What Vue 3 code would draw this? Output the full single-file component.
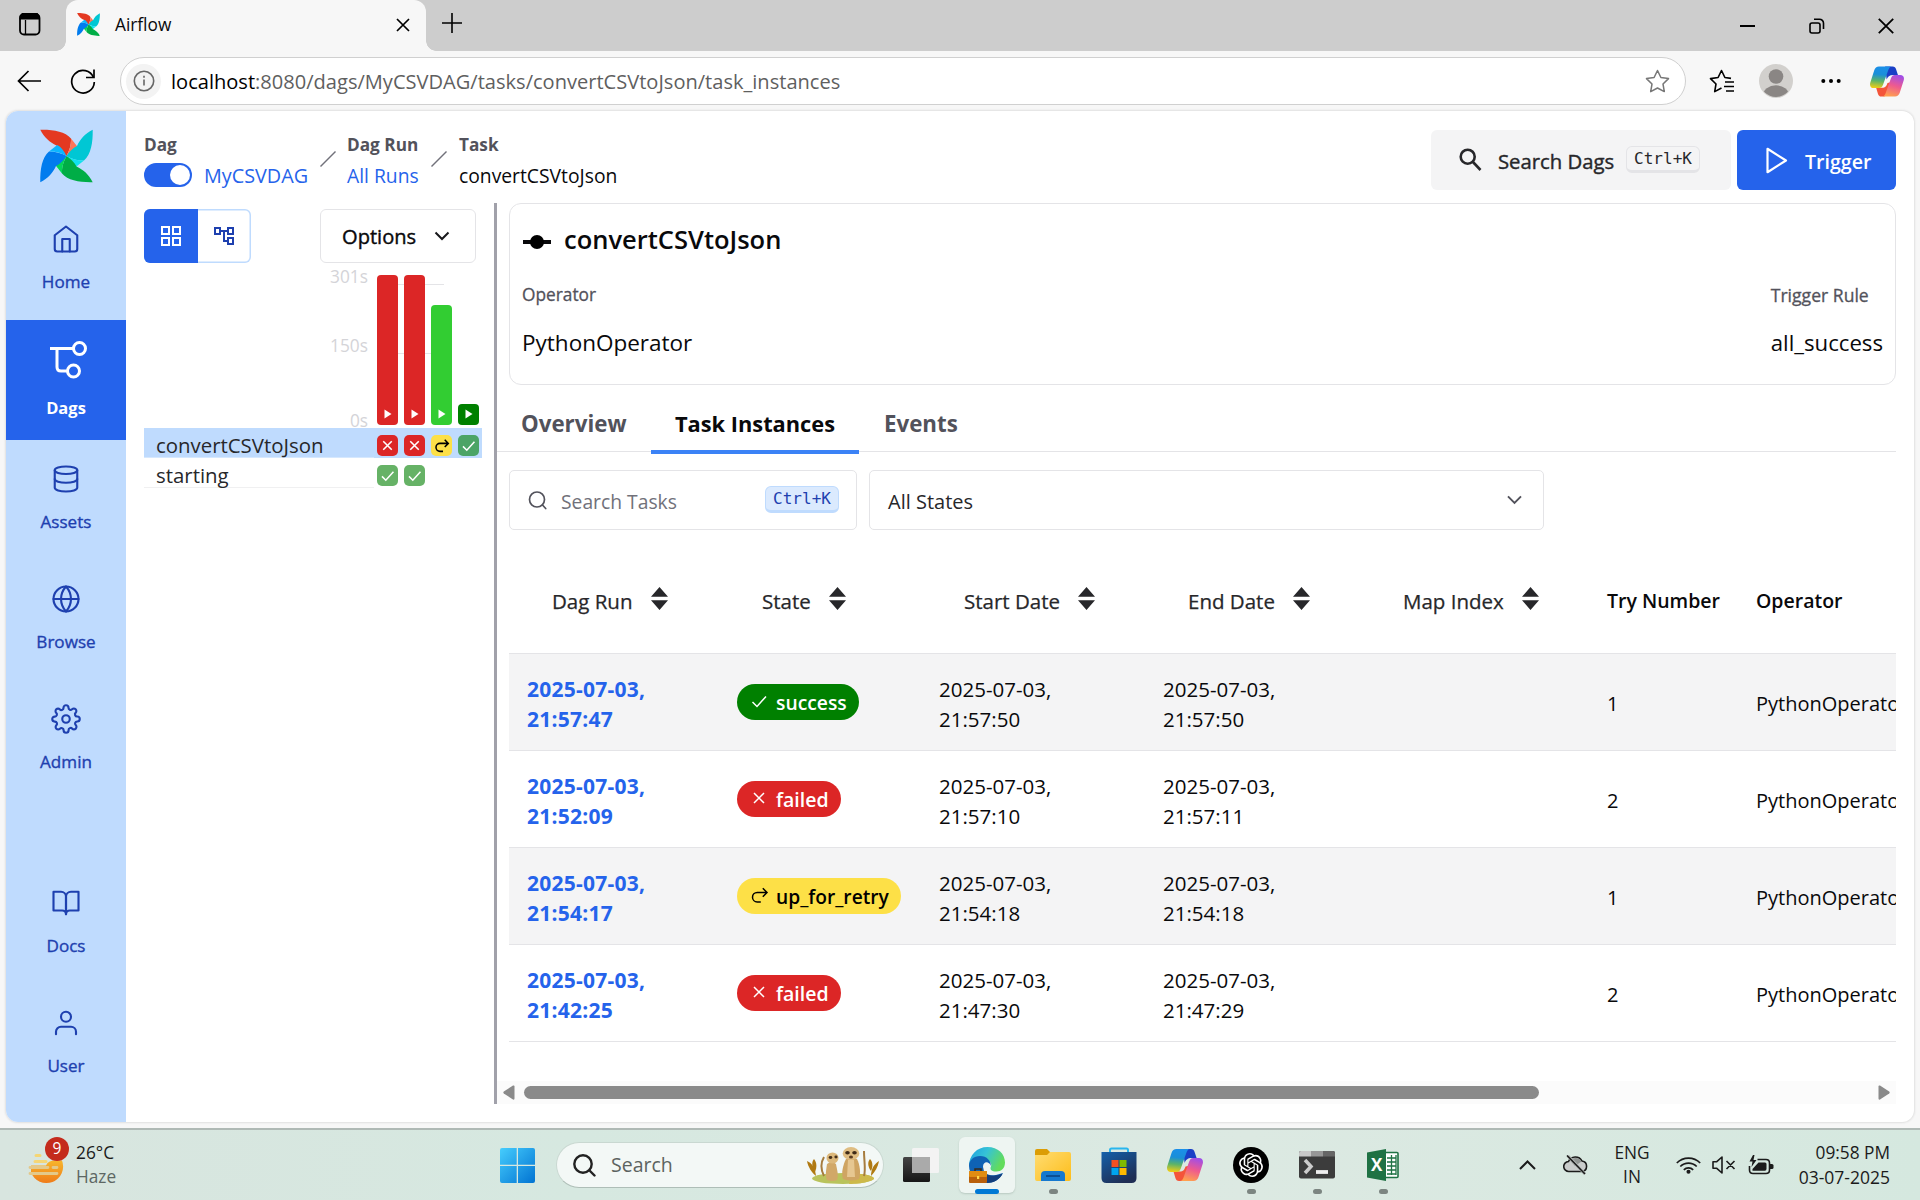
<script setup>
const navTop = [
  { label: 'Home', icon: 'home' },
  { label: 'Dags', icon: 'dags', active: true },
  { label: 'Assets', icon: 'db' },
  { label: 'Browse', icon: 'globe' },
  { label: 'Admin', icon: 'gear' },
]
const navBottom = [
  { label: 'Docs', icon: 'book' },
  { label: 'User', icon: 'user' },
]
const iconPaths = {
  home: ['M3 9l9-7 9 7v11a2 2 0 0 1-2 2H5a2 2 0 0 1-2-2z', 'M9 22V12h6v10'],
  db: ['M3 5a9 3 0 1 0 18 0a9 3 0 1 0-18 0', 'M21 12c0 1.66-4 3-9 3s-9-1.34-9-3', 'M3 5v14c0 1.66 4 3 9 3s9-1.34 9-3V5'],
  globe: ['M2 12a10 10 0 1 0 20 0a10 10 0 1 0-20 0', 'M2 12h20', 'M12 2a15.3 15.3 0 0 1 4 10 15.3 15.3 0 0 1-4 10 15.3 15.3 0 0 1-4-10 15.3 15.3 0 0 1 4-10z'],
  gear: ['M9 12a3 3 0 1 0 6 0a3 3 0 1 0-6 0', 'M19.4 15a1.65 1.65 0 0 0 .33 1.82l.06.06a2 2 0 0 1 0 2.83 2 2 0 0 1-2.83 0l-.06-.06a1.65 1.65 0 0 0-1.82-.33 1.65 1.65 0 0 0-1 1.51V21a2 2 0 0 1-2 2 2 2 0 0 1-2-2v-.09A1.65 1.65 0 0 0 9 19.4a1.65 1.65 0 0 0-1.82.33l-.06.06a2 2 0 0 1-2.83 0 2 2 0 0 1 0-2.83l.06-.06a1.65 1.65 0 0 0 .33-1.82 1.65 1.65 0 0 0-1.51-1H3a2 2 0 0 1-2-2 2 2 0 0 1 2-2h.09A1.65 1.65 0 0 0 4.6 9a1.65 1.65 0 0 0-.33-1.82l-.06-.06a2 2 0 0 1 0-2.83 2 2 0 0 1 2.83 0l.06.06a1.65 1.65 0 0 0 1.82.33H9a1.65 1.65 0 0 0 1-1.51V3a2 2 0 0 1 2-2 2 2 0 0 1 2 2v.09a1.65 1.65 0 0 0 1 1.51 1.65 1.65 0 0 0 1.82-.33l.06-.06a2 2 0 0 1 2.83 0 2 2 0 0 1 0 2.83l-.06.06a1.65 1.65 0 0 0-.33 1.82V9a1.65 1.65 0 0 0 1.51 1H21a2 2 0 0 1 2 2 2 2 0 0 1-2 2h-.09a1.65 1.65 0 0 0-1.51 1z'],
  book: ['M2 3h6a4 4 0 0 1 4 4v14a3 3 0 0 0-3-3H2z', 'M22 3h-6a4 4 0 0 0-4 4v14a3 3 0 0 1 3-3h7z'],
  user: ['M20 21v-2a4 4 0 0 0-4-4H8a4 4 0 0 0-4 4v2', 'M8 7a4 4 0 1 0 8 0a4 4 0 1 0-8 0'],
}
const runs = [
  { h: 150, color: '#dc2626' },
  { h: 150, color: '#dc2626' },
  { h: 120, color: '#32cd32' },
  { h: 21, color: '#008000' },
]
const statePaths = {
  success: 'M3.5 11 8 15.5 17 5.5',
  failed: 'M5 5l10 10M15 5 5 15',
  retry: 'M17.5 7.5H8.2a4.7 4.7 0 0 0 0 9.4h3.6M13.8 3.2l4.2 4.3-4.2 4.3',
}
const gridRows = [
  { name: 'convertCSVtoJson', selected: true, cells: ['failed', 'failed', 'retry', 'success'] },
  { name: 'starting', cells: ['success', 'success'] },
]
const sortable = ['Dag Run', 'State', 'Start Date', 'End Date', 'Map Index']
const rows = [
  { run: '21:57:47', state: 'success', label: 'success', start: '21:57:50', end: '21:57:50', tries: 1 },
  { run: '21:52:09', state: 'failed', label: 'failed', start: '21:57:10', end: '21:57:11', tries: 2 },
  { run: '21:54:17', state: 'retry', label: 'up_for_retry', start: '21:54:18', end: '21:54:18', tries: 1 },
  { run: '21:42:25', state: 'failed', label: 'failed', start: '21:47:30', end: '21:47:29', tries: 2 },
]
const blades = [
  { r: 0, a: '#e43921', b: '#ff7557' },
  { r: 90, a: '#00c7d4', b: '#11e1ee' },
  { r: 180, a: '#00ad46', b: '#04d659' },
  { r: 270, a: '#017cee', b: '#0cb6ff' },
]
const openai = 'M22.2819 9.8211a5.9847 5.9847 0 0 0-.5157-4.9108 6.0462 6.0462 0 0 0-6.5098-2.9A6.0651 6.0651 0 0 0 4.9807 4.1818a5.9847 5.9847 0 0 0-3.9977 2.9 6.0462 6.0462 0 0 0 .7427 7.0966 5.98 5.98 0 0 0 .511 4.9107 6.051 6.051 0 0 0 6.5146 2.9001A5.9847 5.9847 0 0 0 13.2599 24a6.0557 6.0557 0 0 0 5.7718-4.2058 5.9894 5.9894 0 0 0 3.9977-2.9001 6.0557 6.0557 0 0 0-.7475-7.0729zm-9.022 12.6081a4.4755 4.4755 0 0 1-2.8764-1.0408l.1419-.0804 4.7783-2.7582a.7948.7948 0 0 0 .3927-.6813v-6.7369l2.02 1.1686a.071.071 0 0 1 .038.052v5.5826a4.504 4.504 0 0 1-4.4945 4.4944zm-9.6607-4.1254a4.4708 4.4708 0 0 1-.5346-3.0137l.142.0852 4.783 2.7582a.7712.7712 0 0 0 .7806 0l5.8428-3.3685v2.3324a.0804.0804 0 0 1-.0332.0615L9.74 19.9502a4.4992 4.4992 0 0 1-6.1408-1.6464zM2.3408 7.8956a4.485 4.485 0 0 1 2.3655-1.9728V11.6a.7664.7664 0 0 0 .3879.6765l5.8144 3.3543-2.0201 1.1685a.0757.0757 0 0 1-.071 0l-4.8303-2.7865A4.504 4.504 0 0 1 2.3408 7.872zm16.5963 3.8558L13.1038 8.364 15.1192 7.2a.0757.0757 0 0 1 .071 0l4.8303 2.7913a4.4944 4.4944 0 0 1-.6765 8.1042v-5.6772a.79.79 0 0 0-.407-.667zm2.0107-3.0231l-.142-.0852-4.7735-2.7818a.7759.7759 0 0 0-.7854 0L9.409 9.2297V6.8974a.0662.0662 0 0 1 .0284-.0615l4.8303-2.7866a4.4992 4.4992 0 0 1 6.6802 4.66zM8.3065 12.863l-2.02-1.1638a.0804.0804 0 0 1-.038-.0567V6.0742a4.4992 4.4992 0 0 1 7.3757-3.4537l-.142.0805L8.704 5.459a.7948.7948 0 0 0-.3927.6813zm1.0976-2.3654l2.602-1.4998 2.6069 1.4998v2.9994l-2.5974 1.4997-2.6067-1.4997Z'
</script>

<template>
  <div class="screen">
    <!-- shared vector symbols -->
    <svg class="defs" width="0" height="0">
      <defs>
        <linearGradient id="cpA" x1="0.3" y1="0" x2="0.2" y2="1"><stop offset="0" stop-color="#1b8fe8" /><stop offset=".35" stop-color="#1a8fd8" /><stop offset=".65" stop-color="#5bb36a" /><stop offset="1" stop-color="#f8cf10" /></linearGradient>
        <linearGradient id="cpB" x1="0.7" y1="0" x2="0.4" y2="1"><stop offset="0" stop-color="#a04ee8" /><stop offset=".5" stop-color="#ee5a8f" /><stop offset="1" stop-color="#ffa04f" /></linearGradient>
        <linearGradient id="edA" x1="0" y1="0" x2="1" y2=".4"><stop offset="0" stop-color="#1b9de2" /><stop offset=".5" stop-color="#36c3d6" /><stop offset="1" stop-color="#62dc5c" /></linearGradient>
        <linearGradient id="foA" x1="0" y1="0" x2="1" y2="1"><stop offset="0" stop-color="#ffdc72" /><stop offset="1" stop-color="#fdbd1a" /></linearGradient>
        <linearGradient id="stA" x1="0" y1="0" x2=".6" y2="1"><stop offset="0" stop-color="#1360ab" /><stop offset="1" stop-color="#1f2e54" /></linearGradient>
        <linearGradient id="wiA" x1="0" y1="0" x2="1" y2="1"><stop offset="0" stop-color="#46cdfd" /><stop offset="1" stop-color="#0173d2" /></linearGradient>
        <linearGradient id="suA" x1="0" y1="0" x2="0" y2="1"><stop offset="0" stop-color="#f7b62c" /><stop offset="1" stop-color="#ef7c1a" /></linearGradient>
        <linearGradient id="teA" x1="0" y1="0" x2="0" y2="1"><stop offset="0" stop-color="#444" /><stop offset="1" stop-color="#161616" /></linearGradient>
      </defs>
      <symbol id="copilot" viewBox="0 0 36 32">
        <path d="M16 0h8c2 0 3 1 3.600 3l2 6h-5c-4 0-6 2-7 5z" fill="#1a3fc6" />
        <path d="M12 32c-2 0-3-1-3.600-3L6.500 22.500h6c4 0 5-2 6-5l5-1-5 12c-1 2-2 3.500-4 3.500z" fill="#f4553a" />
        <path d="M9.500 0H23c-2 0-3 2-3.700 4l-5.500 15.500c-1 2.500-2 3.500-4 3.500H4c-3 0-4.500-2-3.800-5.500L4.500 4C5.300 1.500 7 0 9.500 0z" fill="url(#cpA)" />
        <path d="M26.500 32H13c2 0 3-2 3.700-4l5.500-15.500c1-2.500 2-3.500 4-3.500H32c3 0 4.500 2 3.800 5.500L31.500 28c-.8 2.500-2.500 4-5 4z" fill="url(#cpB)" />
      </symbol>
      <symbol id="pinwheel" viewBox="0 0 53 53">
        <g v-for="b in blades" :key="b.r" :transform="`rotate(${b.r} 26.5 26.500)`">
          <path d="M.3.300C13 0 25 2 31 9c.3 7-2 13-4.500 17.500C22.500 24 18.500 20 16.500 16 10 13 4 8 .3.300z" :fill="b.a" />
          <path d="M31 9l6.500 8.200c-2 4-6 7-11 9.300C29 22 31.200 16 31 9z" :fill="b.b" />
        </g>
      </symbol>
    </svg>

    <header class="tabbar">
      <svg class="ws" width="22" height="23" viewBox="0 0 22 23" fill="none" stroke="#000" stroke-width="1.800"><rect x="1" y="1" width="19.500" height="20.500" rx="4" /><path d="M1.500 5.500h18.500V3.500L18 1H3.500L1.500 3z" fill="#000" /><path d="M6.500 7v14" stroke-width="1.300" /></svg>
      <div class="tab">
        <svg width="23" height="23"><use href="#pinwheel" /></svg>
        <span>Airflow</span>
        <svg class="tabx" width="14" height="14" viewBox="0 0 14 14" stroke="#000" stroke-width="1.700"><path d="M1 1l12 12M13 1 1 13" /></svg>
      </div>
      <svg class="plus" width="22" height="22" viewBox="0 0 22 22" stroke="#000" stroke-width="1.600"><path d="M11 1v20M1 11h20" /></svg>
      <div class="winctl">
        <svg width="16" height="16" viewBox="0 0 16 16" stroke="#000" stroke-width="2"><path d="M0 8h15" /></svg>
        <svg width="16" height="16" viewBox="0 0 16 16" fill="none" stroke="#000" stroke-width="1.600"><rect x="1" y="5" width="10" height="10" rx="2" /><path d="M5 1.200h5.500a4 4 0 0 1 4 4V11" /></svg>
        <svg width="16" height="16" viewBox="0 0 16 16" stroke="#000" stroke-width="1.800"><path d="M.8.800l14.400 14.400M15.200.8.800 15.200" /></svg>
      </div>
    </header>

    <div class="toolbar">
      <svg class="back" width="24" height="22" viewBox="0 0 24 22" fill="none" stroke="#000" stroke-width="1.700"><path d="M11.500 1 1.500 11l10 10M1.500 11H24" /></svg>
      <svg class="reload" width="26" height="26" viewBox="0 0 26 26" fill="none" stroke="#000" stroke-width="1.700"><path d="M23.500 9.500A11.300 11.300 0 1 0 24.300 14" /><path d="M24 1.500v8h-8" /></svg>
      <div class="address">
        <span class="info"><svg width="22" height="22" viewBox="0 0 22 22" fill="none" stroke="#666" stroke-width="1.600"><circle cx="11" cy="11" r="9.700" /><path d="M11 9.500v6M11 5.700v2" /></svg></span>
        <span class="url"><b>localhost</b>:8080/dags/MyCSVDAG/tasks/convertCSVtoJson/task_instances</span>
        <svg class="star" width="25" height="25" viewBox="0 0 25 25" fill="none" stroke="#777" stroke-width="1.500" stroke-linejoin="round"><path d="M12.500 1.500l3.400 7 7.600 1.100-5.500 5.400 1.300 7.600-6.800-3.600-6.800 3.600L7 15 1.500 9.600l7.600-1.100z" /></svg>
      </div>
      <svg class="favs" width="26" height="25" viewBox="0 0 26 25" fill="none" stroke="#000" stroke-width="1.600" stroke-linejoin="round"><path d="M22 9.400l-6.100-.9-3.400-7-3.400 7-7.600 1.100L7 15l-1.300 7.600L12.500 19M16 13h9M15 17.500h10M17 22h8" /></svg>
      <svg class="avatar" width="34" height="34" viewBox="0 0 34 34"><defs><clipPath id="av"><circle cx="17" cy="17" r="16" /></clipPath></defs><circle cx="17" cy="17" r="17" fill="#d2d0cd" /><g clip-path="url(#av)" fill="#8a8684"><circle cx="17" cy="12.500" r="7.300" /><ellipse cx="17" cy="31" rx="13" ry="9.700" /></g></svg>
      <svg class="dots" width="20" height="6" viewBox="0 0 20 6"><circle cx="2.300" cy="3" r="2" /><circle cx="10" cy="3" r="2" /><circle cx="17.700" cy="3" r="2" /></svg>
      <svg width="34" height="31"><use href="#copilot" /></svg>
    </div>

    <div class="pagewrap">
      <div class="page">
        <nav class="side">
          <svg class="logo" width="53" height="54"><use href="#pinwheel" /></svg>
          <div v-for="n in navTop" :key="n.label" class="nav" :class="{ active: n.active }">
            <svg v-if="n.icon === 'dags'" width="38" height="38" viewBox="0 0 38 38" fill="none" stroke="#fff" stroke-width="3"><circle cx="30.500" cy="7.500" r="6" /><circle cx="24.500" cy="30" r="6" /><path d="M1 7.500h23M8 7.500V26q0 4 4 4h6.500" /></svg>
            <svg v-else width="30" height="30" viewBox="0 0 24 24" fill="none" stroke="currentColor" stroke-width="1.700" stroke-linecap="round" stroke-linejoin="round"><path v-for="p in iconPaths[n.icon]" :key="p" :d="p" /></svg>
            <span>{{ n.label }}</span>
          </div>
          <div class="grow"></div>
          <div v-for="n in navBottom" :key="n.label" class="nav">
            <svg width="30" height="30" viewBox="0 0 24 24" fill="none" stroke="currentColor" stroke-width="1.700" stroke-linecap="round" stroke-linejoin="round"><path v-for="p in iconPaths[n.icon]" :key="p" :d="p" /></svg>
            <span>{{ n.label }}</span>
          </div>
        </nav>

        <main class="main">
          <div class="top">
            <div class="crumbs">
              <div class="crumb c1"><b>Dag</b><span class="dagline"><i class="toggle"></i><a>MyCSVDAG</a></span></div>
              <svg class="slash" width="16" height="16" viewBox="0 0 16 16" stroke="#71717a" stroke-width="1.400"><path d="M.5 15.500 15.500.500" /></svg>
              <div class="crumb c2"><b>Dag Run</b><a>All Runs</a></div>
              <svg class="slash" width="16" height="16" viewBox="0 0 16 16" stroke="#71717a" stroke-width="1.400"><path d="M.5 15.500 15.500.500" /></svg>
              <div class="crumb c3"><b>Task</b><span class="cur">convertCSVtoJson</span></div>
            </div>
            <div class="searchdags">
              <svg width="23" height="24" viewBox="0 0 23 24" fill="none" stroke="#27272a" stroke-width="2.600"><circle cx="8.700" cy="8.700" r="7" /><path d="M13.500 13.500l8 8.500" /></svg>
              <span class="medium">Search Dags</span><kbd>Ctrl+K</kbd>
            </div>
            <div class="trigger">
              <svg width="22" height="27" viewBox="0 0 22 27" fill="none" stroke="#fff" stroke-width="2.200" stroke-linejoin="round"><path d="M1.500 1.800v23.400L20 13.500z" /></svg>
              <span>Trigger</span>
            </div>
          </div>

          <div class="body">
            <section class="left">
              <div class="controls">
                <div class="views">
                  <span class="on"><svg width="20" height="20" viewBox="0 0 20 20" fill="none" stroke="#fff" stroke-width="2"><path d="M1 1h7v7H1zM12 1h7v7h-7zM1 12h7v7H1zM12 12h7v7h-7z" /></svg></span>
                  <span><svg width="24" height="24" viewBox="0 0 24 24" fill="#1e40af"><path d="M22 11V3h-7v3H9V3H2v8h7V8h2v10h4v3h7v-8h-7v3h-2V8h2v3h7zM7 9H4V5h3v4zm10 6h3v4h-3v-4zm0-10h3v4h-3V5z" /></svg></span>
                </div>
                <div class="options"><span class="medium">Options</span><svg width="16" height="10" viewBox="0 0 16 10" fill="none" stroke="#18181b" stroke-width="2"><path d="M1.500 1.500 8 8l6.500-6.500" /></svg></div>
              </div>
              <div class="chart">
                <div class="axis"><span>301s</span><span>150s</span><span>0s</span></div>
                <div class="bars">
                  <i class="gl g1"></i><i class="gl g2"></i>
                  <div v-for="(r, i) in runs" :key="i" class="bar" :style="{ height: r.h + 'px', background: r.color }">
                    <svg width="8" height="10" viewBox="0 0 8 10" fill="#fff"><path d="M.5.500v9L7.500 5z" /></svg>
                  </div>
                </div>
              </div>
              <div v-for="g in gridRows" :key="g.name" class="grow-row" :class="{ sel: g.selected }">
                <span class="gname">{{ g.name }}</span>
                <span class="cells">
                  <i v-for="(c, i) in g.cells" :key="i" :class="['cell', c]"><svg width="17" height="17" viewBox="0 0 20 20" fill="none" stroke="currentColor" stroke-width="1.800"><path :d="statePaths[c]" /></svg></i>
                </span>
              </div>
            </section>
            <div class="splitter"></div>

            <section class="right">
              <div class="card">
                <div class="title">
                  <svg width="30" height="16" viewBox="0 0 30 16"><path d="M1 8h28" stroke="#09090b" stroke-width="3.800" /><circle cx="15" cy="8" r="7" fill="#000" /></svg>
                  <span>convertCSVtoJson</span>
                </div>
                <div class="facts">
                  <div><small>Operator</small><p>PythonOperator</p></div>
                  <div class="f2"><small>Trigger Rule</small><p>all_success</p></div>
                </div>
              </div>
              <div class="tabs"><span class="t1">Overview</span><span class="t2">Task Instances</span><span class="t3">Events</span></div>
              <div class="filters">
                <div class="stask">
                  <svg width="19" height="19" viewBox="0 0 19 19" fill="none" stroke="#52525b" stroke-width="1.700" stroke-linecap="round"><circle cx="9" cy="8.500" r="7.500" /><path d="M14.500 14l3.200 3.500" /></svg>
                  <span>Search Tasks</span><kbd>Ctrl+K</kbd>
                </div>
                <div class="states"><span>All States</span><svg width="15" height="10" viewBox="0 0 15 10" fill="none" stroke="#52525b" stroke-width="1.900"><path d="M1 1.300 7.500 8 14 1.300" /></svg></div>
              </div>
              <div class="table">
                <div class="tr th">
                  <div v-for="s in sortable" :key="s" class="hs"><span>{{ s }}</span><svg width="17" height="23" viewBox="0 0 17 23" fill="#27272a"><path d="M8.500 0 17 9.800H0zM8.500 23 17 13.200H0z" /></svg></div>
                  <div class="hb">Try Number</div><div class="hb">Operator</div>
                </div>
                <div v-for="(r, i) in rows" :key="i" class="tr td">
                  <div class="date link">2025-07-03,<br>{{ r.run }}</div>
                  <div><span :class="['badge', r.state]"><svg width="20" height="20" viewBox="0 0 20 20" fill="none" stroke="currentColor" stroke-width="1.500"><path :d="statePaths[r.state]" /></svg><b>{{ r.label }}</b></span></div>
                  <div class="date">2025-07-03,<br>{{ r.start }}</div>
                  <div class="date">2025-07-03,<br>{{ r.end }}</div>
                  <div></div>
                  <div class="op">{{ r.tries }}</div>
                  <div class="op">PythonOperator</div>
                </div>
              </div>
              <div class="hscroll">
                <svg width="12" height="15" viewBox="0 0 12 15" fill="#8a8a8a"><path d="M11.500 1.500v12q0 1.500-1.500 1L.8 8.500q-1-1 0-2L10 .5q1.500-.5 1.500 1z" /></svg>
                <i class="thumb"></i>
                <svg class="rt" width="12" height="15" viewBox="0 0 12 15" fill="#8a8a8a"><path d="M.5 1.500v12q0 1.500 1.500 1l9.200-6q1-1 0-2L2 .5Q.5 0 .5 1.500z" /></svg>
              </div>
            </section>
          </div>
        </main>
      </div>
    </div>

    <footer class="taskbar">
      <div class="weather">
        <div class="wicon">
          <svg width="36" height="32" viewBox="0 0 36 32"><path d="M3 13.500h15q2-5 9-5l7 0a16.500 16.500 0 0 1-31 12z" fill="url(#suA)" /><path d="M8 3.500h4M7 9.500h11" stroke="#f5d675" stroke-width="3" stroke-linecap="round" /><path d="M2 15.500h18M25 15.500h4M2 21.500h27" stroke="#e3c98b" stroke-width="2.800" stroke-linecap="round" /></svg>
          <span class="nine">9</span>
        </div>
        <div class="wt"><span>26°C</span><span class="dim">Haze</span></div>
      </div>
      <svg class="win" width="35" height="35" viewBox="0 0 35 35" fill="url(#wiA)"><path d="M2 0h14.700v16.700H0V2q0-2 2-2zM18 0h15q2 0 2 2v14.700H18zM0 18h16.700v17H2q-2 0-2-2zM18 18h17v15q0 2-2 2H18z" /></svg>
      <div class="tsearch">
        <svg width="23" height="23" viewBox="0 0 23 23" fill="none" stroke="#222" stroke-width="2.400" stroke-linecap="round"><circle cx="10" cy="10" r="8.700" /><path d="M16.500 16.500l5 5" /></svg>
        <span>Search</span>
        <svg class="meer" width="72" height="38" viewBox="0 0 72 38">
          <ellipse cx="36" cy="32.500" rx="31" ry="5.500" fill="#b9c35c" /><path d="M45 27.500c14 0 22 3 22 5s-12 5.500-25 5.500z" fill="#cdb94a" />
          <g fill="#b07a12"><path d="M9 30C5 27 1 21 0 15c5 2 8 7 9 15z" /><path d="M8 26C4 20 5 15 7 13c3 4 3 8 1 13z" /><path d="M64 30c4-4 7-9 8-15-5 3-8 8-8 15z" /><path d="M64 25c-4-5-3-10-1-12 3 3 3 8 1 12z" /></g>
          <path d="M17 30c-4-8-3-14 0-19M57 30c2-6 0-15 0-25" stroke="#a67c3e" stroke-width="2" fill="none" />
          <path d="M20 34c-2-4-1-9 0-16q5-4 9 0c1 6 3 11 1 16q-5 2-10 0z" fill="#d1a868" /><ellipse cx="25.500" cy="12" rx="6" ry="5.500" fill="#dcb87b" /><ellipse cx="23.500" cy="11.500" rx="1.800" ry="1.400" fill="#463019" /><ellipse cx="29" cy="11" rx="1.600" ry="1.400" fill="#463019" />
          <path d="M36 33c-2-6 0-14 3-20q6-3 11 0c3 6 4 14 2 20q-8 3-16 0z" fill="#cfa563" /><path d="M41 14h6l1 17h-8z" fill="#e6c791" /><ellipse cx="44" cy="7.500" rx="8.300" ry="6.500" fill="#dfbd82" /><ellipse cx="40.500" cy="6.800" rx="2.300" ry="1.800" fill="#3e2a17" /><ellipse cx="47.500" cy="6.800" rx="2.300" ry="1.800" fill="#3e2a17" /><ellipse cx="44" cy="11" rx="2" ry="1.500" fill="#5a3c20" />
        </svg>
      </div>
      <svg class="tview" width="36" height="34" viewBox="0 0 36 34"><rect x="0" y="9" width="27" height="25" rx="1.500" fill="url(#teA)" /><rect x="9" y="0" width="27" height="25" rx="1.500" fill="#f3f3f3" /><rect x="9" y="9" width="18" height="16" fill="#aaa" /></svg>
      <div class="app active">
        <svg width="36" height="36" viewBox="0 0 36 36"><path d="M0 19C0 8 8 0 18.500 0 29 0 36 7 36 15.500c0 6-4 9-8.500 9-5 0-7-2-5.500-5 1-3-1-6-5-6z" fill="url(#edA)" /><path d="M0 19c0-6 5-10 11-10 7 0 11 5 11 10-2-5-8-5-8 1 0 7 6 9 13 8l7-2c-3 6-9 10-16 10C8 36 0 28 0 19z" fill="#0f62b4" /><path d="M14 20c0 7 6 9.500 12 8.500 3 0 5-1 7.500-2C31 33 24 36 18 36z" fill="#123e7c" /><rect x="0" y="24" width="18" height="12" rx="1" fill="#b85f0b" /><rect x="0" y="24" width="18" height="6" rx="1" fill="#e08c12" /><path d="M6 24v-2h6v2" stroke="#3a2a18" stroke-width="1.500" fill="none" /><rect x="8" y="29" width="2.200" height="3" fill="#ffd84a" /></svg>
        <i class="ind big"></i>
      </div>
      <div class="app">
        <svg width="36" height="36" viewBox="0 0 36 36"><path d="M0 4q0-2 2-2h10l3 3v5H0z" fill="#dc9d05" /><path d="M0 8h12l3-3h19q2 0 2 2v25q0 2-2 2H2q-2 0-2-2z" fill="url(#foA)" /><path d="M6 34v-6q0-4 4-4h16q4 0 4 4v6z" fill="#1579cf" /><path d="M11 29h14" stroke="#0c4f93" stroke-width="2" /></svg>
        <i class="ind"></i>
      </div>
      <div class="app">
        <svg width="36" height="36" viewBox="0 0 36 36"><path d="M9 6V3q0-1.500 1.500-1.500h15Q27 1.500 27 3v3" stroke="#29b6ee" stroke-width="2" fill="none" /><path d="M.5 5h35v26q0 5-5 5h-25q-5 0-5-5z" fill="url(#stA)" /><path d="M10.500 13h7v7h-7z" fill="#f25022" /><path d="M18.500 13h7v7h-7z" fill="#7fba00" /><path d="M10.500 21h7v7h-7z" fill="#00a4ef" /><path d="M18.500 21h7v7h-7z" fill="#ffb900" /></svg>
      </div>
      <div class="app"><svg width="36" height="32"><use href="#copilot" /></svg></div>
      <div class="app">
        <svg width="36" height="36" viewBox="0 0 36 36"><circle cx="18" cy="18" r="18" fill="#000" /><g transform="translate(6 6)"><path :d="openai" fill="#fff" /></g></svg>
        <i class="ind"></i>
      </div>
      <div class="app">
        <svg width="36" height="28" viewBox="0 0 36 28"><rect width="36" height="27.500" rx="2" fill="#3c3c3c" /><path d="M2 0h10v5.500H0V2q0-2 2-2z" fill="#c8c8c8" /><path d="M12 0h12v5.500H12z" fill="#979797" /><path d="M24 0h10q2 0 2 2v3.500H24z" fill="#666" /><path d="M6 9l6 6.500-6 6.500" stroke="#ccc" stroke-width="3.500" fill="none" /><path d="M17 21h12" stroke="#eee" stroke-width="3.800" /></svg>
        <i class="ind"></i>
      </div>
      <div class="app">
        <div class="excel">
          <svg width="32" height="32" viewBox="0 0 32 32"><rect x="14" y="3.500" width="17" height="25" rx="1" fill="#fff" stroke="#1f7244" stroke-width="1.600" /><path d="M20 9h9M20 13h9M20 17h9M20 21h9M20 25h9" stroke="#1f7244" stroke-width="1.300" /><path d="M24.500 6v20M29 6v20" stroke="#1f7244" stroke-width="1.300" /><path d="M0 3.500 19 0v32L0 28.500z" fill="#1f7244" /></svg>
          <span>X</span>
        </div>
        <i class="ind"></i>
      </div>
      <div class="tray">
        <svg class="caret" width="17" height="10" viewBox="0 0 17 10" fill="none" stroke="#1b1b1b" stroke-width="2"><path d="M1 9l7.500-7.500L16 9" /></svg>
        <svg class="cloud" width="25" height="20" viewBox="0 0 25 20"><path d="M6 16.500a5 5 0 0 1-.5-10 7.500 7.500 0 0 1 13.500-.5 5.300 5.300 0 0 1 0 10.500z" fill="#c9cccb" stroke="#1b1b1b" stroke-width="1.600" /><path d="M7 5.500a7 7 0 0 1 11.500 1L12 11z" fill="#909492" /><path d="M5 1l17 18" stroke="#b5bab8" stroke-width="3" /><path d="M4 .5 22 19" stroke="#1b1b1b" stroke-width="1.600" /></svg>
        <div class="lang"><span>ENG</span><span>IN</span></div>
        <svg class="wifi" width="25" height="18" viewBox="0 0 25 18" fill="none" stroke="#1b1b1b" stroke-width="1.700"><path d="M.8 7a16.500 16.500 0 0 1 23.400 0M4.300 10.500a11.600 11.600 0 0 1 16.400 0M7.800 13.800a6.700 6.700 0 0 1 9.400 0" /><circle cx="12.500" cy="15.800" r="1.200" fill="#1b1b1b" /></svg>
        <svg class="spk" width="24" height="18" viewBox="0 0 24 18" fill="none" stroke="#1b1b1b" stroke-width="1.600" stroke-linejoin="round"><path d="M1 5.800h3.500L10 1v16l-5.500-4.800H1zM14.500 5l8 8M22.500 5l-8 8" /></svg>
        <svg class="bat" width="26" height="20" viewBox="0 0 26 20"><path d="M9.500 4.500H18q3.500 0 3.500 3.500v7q0 3.500-3.500 3.500H5Q1.500 18.500 1.500 15v-4" fill="none" stroke="#1b1b1b" stroke-width="1.600" /><path d="M22 9h2q1.500 0 1.500 1.500v2q0 1.500-1.500 1.500h-2z" fill="#1b1b1b" /><path d="M10.500 7.500h6.500q1.500 0 1.500 1.500v5q0 1.700-1.700 1.700H4.500V14z" fill="#1b1b1b" /><path d="M5 0 1.500 6.500h3L3.500 12 8.500 5H5.500L6.500 0z" fill="#1b1b1b" /></svg>
        <div class="clock"><span>09:58 PM</span><span>03-07-2025</span></div>
      </div>
    </footer>
  </div>
</template>

<style>
html, body { margin: 0; background: #f7f7f7; }
</style>

<style scoped>
* { box-sizing: border-box; }
.screen { width: 1920px; height: 1200px; overflow: hidden; display: flex; flex-direction: column; background: #f7f7f7; font-family: "Open Sans", "Noto Sans", sans-serif; font-size: 20px; color: #09090b; line-height: 1; }
.defs { position: absolute; }
svg { flex: none; display: block; }
span, b, a { white-space: nowrap; }
.medium { -webkit-text-stroke: .4px currentColor; }

.tabbar { height: 51px; background: #cdcdcd; display: flex; align-items: center; flex: none; }
.ws { margin-left: 19px; margin-top: -3px; }
.tab { margin-left: 25px; width: 360px; height: 51px; background: #f7f7f7; border-radius: 12px 12px 0 0; display: flex; align-items: center; padding: 0 16px 3px 11px; position: relative; }
.tab::before, .tab::after { content: ""; position: absolute; bottom: 0; width: 10px; height: 10px; }
.tab::before { left: -10px; background: radial-gradient(circle at 0 0, #cdcdcd 9.5px, #f7f7f7 10px); }
.tab::after { right: -10px; background: radial-gradient(circle at 100% 0, #cdcdcd 9.5px, #f7f7f7 10px); }
.tab span { margin: 1px 0 0 15px; font-size: 17.3px; }
.tabx { margin-left: auto; margin-top: 1px; }
.plus { margin-left: 15px; margin-top: -5px; }
.winctl { margin-left: auto; margin-right: 26px; display: flex; gap: 53px; }

.toolbar { height: 60px; display: flex; align-items: center; flex: none; }
.back { margin-left: 17px; }
.reload { margin-left: 29px; }
.address { margin-left: 24px; width: 1566px; height: 48px; border: 1.5px solid #d0d0d0; border-radius: 24px; background: #fff; display: flex; align-items: center; padding: 0 15px 0 5px; }
.info { width: 35px; height: 35px; border-radius: 50%; background: #f3f3f3; display: flex; align-items: center; justify-content: center; }
.url { margin: 2px 0 0 10px; font-size: 20.070px; color: #5f5f5f; }
.url b { font-weight: 400; color: #000; }
.star { margin-left: auto; }
.favs { margin-left: 23px; }
.avatar { margin-left: 24px; }
.dots { margin: 0 29px 0 28px; }

.pagewrap { height: 1017px; padding: 0 6px 6px; flex: none; }
.page { height: 1011px; background: #fff; border-radius: 12px; box-shadow: 0 0 2px 1px #e0e0e0; display: flex; overflow: hidden; }
.side { width: 120px; background: #bfdbfe; display: flex; flex-direction: column; padding-bottom: 18px; color: #1e40af; }
.logo { margin: 18px 0 17px 34px; }
.nav { height: 120px; display: flex; flex-direction: column; align-items: center; padding-top: 24px; }
.nav span { font-size: 17.100px; margin-top: 19px; -webkit-text-stroke: .35px currentColor; }
.nav.active { background: #2563eb; color: #fff; padding-top: 21px; }
.nav.active span { font-weight: 700; margin-top: 21px; font-size: 16.500px; -webkit-text-stroke: 0; }
.nav.active svg { margin-left: 3px; }
.grow { flex: 1; }

.main { flex: 1; display: flex; flex-direction: column; min-width: 0; }
.top { height: 92px; display: flex; align-items: flex-start; padding: 19px 18px 0; }
.crumbs { display: flex; align-items: center; flex: 1; margin-top: 3px; height: 54px; }
.crumb { display: flex; flex-direction: column; }
.crumb b { font-size: 17.200px; color: #52525b; font-weight: 700; line-height: 24px; }
.crumb a, .crumb .cur { font-size: 19.300px; line-height: 24px; margin-top: 7px; }
.crumb a { color: #2563eb; }
.c1 { width: 176px; }
.c2 { width: 84px; }
.c3 { margin-left: 1px; }
.dagline { display: flex; align-items: center; margin-top: 6px; }
.crumb .dagline a { margin: 1px 0 0 12px; font-size: 19.800px; }
.toggle { width: 48px; height: 24px; border-radius: 12px; background: #2563eb; display: flex; justify-content: flex-end; align-items: center; padding-right: 2px; }
.toggle::after { content: ""; width: 20px; height: 20px; border-radius: 50%; background: #fff; }
.slash { margin-right: 11px; margin-top: -2px; }
.searchdags { width: 300px; height: 60px; border-radius: 6px; background: #f4f4f5; display: flex; align-items: center; padding-left: 28px; color: #27272a; }
.searchdags span { margin: 3px 0 0 16px; width: 128px; font-size: 20.300px; }
kbd { font-family: "DejaVu Sans Mono", "Liberation Mono", monospace; font-size: 16px; height: 27px; width: 74px; border-radius: 6px; border: 1.500px solid #e4e4e7; border-bottom-width: 3px; display: flex; align-items: center; justify-content: center; margin-top: -1px; }
.trigger { margin-left: 6px; width: 159px; height: 60px; border-radius: 6px; background: #2563eb; color: #fff; display: flex; align-items: center; padding-left: 29px; }
.trigger span { margin: 3px 0 0 17px; font-weight: 600; font-size: 19.600px; }

.body { display: flex; height: 901px; }
.left { width: 368px; padding: 6px 12px 0 18px; }
.controls { display: flex; justify-content: space-between; padding-right: 6px; height: 54px; }
.views { display: flex; width: 107px; border-radius: 6px; overflow: hidden; box-shadow: inset 0 0 0 1.500px #bfdbfe; }
.views span { flex: 1; display: flex; align-items: center; justify-content: center; }
.views .on { background: #2563eb; }
.options { width: 156px; border: 1.500px solid #e4e4e7; border-radius: 6px; display: flex; align-items: center; padding-left: 21px; }
.options span { font-size: 20.100px; width: 92px; margin-top: 3px; }
.chart { display: flex; height: 165px; }
.axis { width: 224px; display: flex; flex-direction: column; align-items: flex-end; font-size: 17.300px; color: #d4d4d8; height: 165px; padding-top: 4px; line-height: 20px; }
.axis span:nth-child(2) { margin-top: 49px; }
.axis span:nth-child(3) { margin-top: 55px; }
.bars { position: relative; margin-left: 9px; display: flex; gap: 6px; align-items: flex-end; height: 162px; }
.gl { position: absolute; left: 0; height: 1px; background: #e4e4e7; }
.g1 { top: 21px; width: 67px; }
.g2 { top: 90px; width: 67px; }
.bar { position: relative; width: 21px; border-radius: 4px; display: flex; align-items: flex-end; justify-content: center; padding-bottom: 6px; }
.grow-row { height: 30px; display: flex; }
.grow-row.sel { background: #bfdbfe; }
.gname { width: 230px; padding-left: 12px; font-size: 20.400px; line-height: 34px; border-bottom: 1px solid #f0f0f1; color: #27272a; height: 30px; }
.sel .gname { border-color: #d6e8fe; }
.cells { display: flex; gap: 6px; padding: 7px 0 0 3px; }
.cell { width: 21px; height: 21px; border-radius: 5px; display: flex; align-items: center; justify-content: center; color: #fff; }
.cell.failed { background: #dc2626; }
.cell.retry { background: #fde047; color: #000; }
.cell.success { background: #66b266; }
.sel .cell.success { background: #4ca466; }
.splitter { width: 3px; background: #a1a1aa; }

.right { flex: 1; min-width: 0; padding-right: 18px; display: flex; flex-direction: column; }
.card { margin-left: 12px; height: 182px; border: 1.500px solid #e4e4e7; border-radius: 12px; padding: 0 12px; flex: none; }
.title { display: flex; align-items: center; height: 73px; font-size: 25.500px; font-weight: 600; }
.title svg { margin-top: 3px; }
.title span { margin-left: 12px; margin-top: -2px; }
.facts { display: flex; justify-content: space-between; }
.facts small { display: block; font-size: 17.300px; color: #52525b; margin-top: 8px; line-height: 20px; -webkit-text-stroke: .3px currentColor; }
.facts p { margin: 24px 0 0; font-size: 22.500px; line-height: 28px; }
.f2 small { font-size: 17.600px; }
.f2 p { font-size: 22.200px; }
.tabs { height: 67px; border-bottom: 1.500px solid #e4e4e7; display: flex; font-size: 22.300px; font-weight: 700; color: #52525b; flex: none; line-height: 77px; }
.t1 { margin-left: 24px; width: 130px; }
.t2 { width: 208px; text-align: center; color: #09090b; border-bottom: 4px solid #3b82f6; height: 69px; font-size: 21.800px; }
.t3 { margin-left: 25px; }
.filters { margin: 18px 0 0 12px; display: flex; gap: 12px; height: 60px; flex: none; font-size: 20px; }
.stask { width: 348px; border: 1.500px solid #e4e4e7; border-radius: 5px; display: flex; align-items: center; padding-left: 18px; color: #71717a; }
.stask span { margin: 3px 0 0 14px; width: 204px; font-size: 19.300px; }
.stask kbd { background: #dbeafe; border-color: #bfdbfe; color: #1e40af; }
.states { width: 675px; border: 1.500px solid #e4e4e7; border-radius: 5px; display: flex; align-items: center; justify-content: space-between; padding: 0 21px 0 18px; color: #27272a; }
.states span { margin-top: 3px; }
.table { margin: 18px 0 0 12px; overflow: hidden; flex: none; }
.tr { display: grid; grid-template-columns: 210px 202px 224px 215px 229px 149px 200px; align-items: center; border-bottom: 1.500px solid #e4e4e7; }
.th { height: 106px; padding-bottom: 1px; }
.hs { display: flex; align-items: center; padding-left: 43px; font-size: 20.500px; color: #27272a; gap: 18px; -webkit-text-stroke: .25px currentColor; }
.hs span { margin-top: 2px; }
.hs svg { margin-top: -3px; }
.hb { padding-left: 18px; font-weight: 600; font-size: 19.500px; margin-top: 2px; white-space: nowrap; }
.td { height: 97px; }
.td:nth-child(even) { background: #f4f4f5; }
.td > div { padding-left: 18px; }
.td > .date { line-height: 30px; font-size: 20.500px; white-space: nowrap; padding-top: 3px; }
.td > .link { color: #2563eb; font-weight: 700; font-size: 21px; letter-spacing: .25px; }
.op { padding-top: 3px; }
.badge { display: inline-flex; align-items: center; height: 36px; border-radius: 18px; padding: 0 12px; color: #fff; vertical-align: middle; margin-top: -1px; }
.badge svg { margin-top: -2px; }
.badge b { font-weight: 600; font-size: 19.500px; margin: 3px 0 0 7px; }
.badge.success { background: #008000; }
.badge.success b { font-size: 19.300px; }
.badge.failed { background: #dc2626; }
.badge.retry { background: #fde047; color: #000; }
.badge.retry b { font-size: 19.200px; }
.hscroll { margin-top: auto; height: 23px; background: #fbfbfb; display: flex; align-items: center; padding: 0 6px; }
.thumb { width: 1015px; height: 13px; border-radius: 7px; background: #8a8a8a; margin-left: 9px; }
.rt { margin-left: auto; }

.taskbar { height: 72px; border-top: 2px solid #afb9b5; background: linear-gradient(90deg, #d8e5df, #d6e8e0 30%, #dce9e2 65%, #d5e8df); display: flex; align-items: center; color: #1b1b1b; }
.weather { display: flex; width: 471px; padding-left: 28px; align-items: center; flex: none; }
.wicon { position: relative; width: 48px; padding-top: 5px; }
.nine { position: absolute; left: 17px; top: -10px; width: 24px; height: 24px; border-radius: 50%; background: #c42b1c; color: #fff; font-size: 15.500px; display: flex; align-items: center; justify-content: center; }
.wt, .lang, .clock { display: flex; flex-direction: column; font-size: 17.300px; line-height: 24px; margin-top: -1px; }
.dim { color: #5d6763; }
.win { margin-left: 29px; }
.tsearch { margin-left: 21px; width: 328px; height: 46px; border-radius: 23px; background: #f3f8f6; border: 1.500px solid #c9d8d1; border-bottom-color: #aebeb7; display: flex; align-items: center; padding: 0 4px 0 16px; color: #5c6360; font-size: 19.500px; }
.tsearch span { margin-left: 15px; }
.meer { margin-left: auto; }
.tview { margin: 0 20px 0 19px; }
.app { position: relative; width: 56px; height: 56px; margin-right: 10px; display: flex; align-items: center; justify-content: center; border-radius: 6px; flex: none; }
.app.active { background: #eef5f2; box-shadow: 0 1px 2px #b9c9c1; }
.ind { position: absolute; bottom: -1px; width: 9px; height: 5px; border-radius: 3px; background: #7c8581; }
.ind.big { width: 24px; background: #0078d4; }
.excel { position: relative; }
.excel span { position: absolute; left: 4px; top: 7px; color: #fff; font-size: 17px; font-weight: 700; }
.tray { display: flex; align-items: center; margin-left: auto; margin-right: 30px; }
.cloud { margin-left: 27px; }
.lang { margin-left: 27px; width: 34px; align-items: center; }
.wifi { margin-left: 27px; }
.spk { margin-left: 11px; }
.bat { margin-left: 12px; }
.clock { width: 116px; align-items: flex-end; }
.clock span:last-child { font-size: 17.500px; }
</style>
